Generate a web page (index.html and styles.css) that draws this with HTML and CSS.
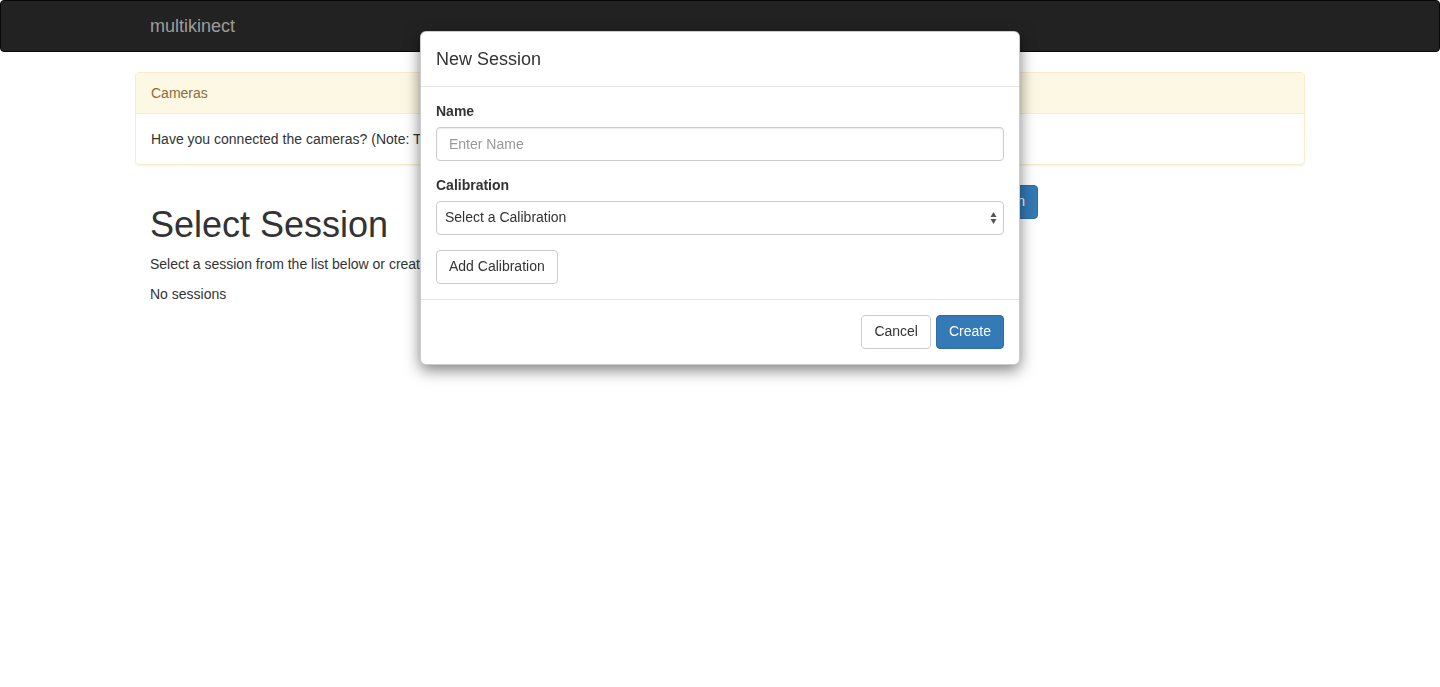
FILE: index.html
```html
<!DOCTYPE html>
<html lang="en">
<head>
<meta charset="utf-8">
<title>multikinect</title>
<link rel="stylesheet" href="styles.css">
</head>
<body>
<nav class="navbar">
  <div class="container">
    <a class="brand" href="#">multikinect</a>
  </div>
</nav>

<main class="container">
  <section class="panel">
    <div class="panel-heading">Cameras</div>
    <div class="panel-body">Have you connected the cameras? (Note: The Kinect cameras must be connected before starting a session.)</div>
  </section>

  <section class="sessions">
    <h1>Select Session</h1>
    <button class="btn btn-primary new-session" type="button">New Session</button>
    <p class="wide">Select a session from the list below or create a new one.</p>
    <p class="wide">No sessions</p>
  </section>
</main>

<div class="modal">
  <div class="modal-dialog">
    <div class="modal-content">
      <div class="modal-header">
        <h4 class="modal-title">New Session</h4>
      </div>
      <div class="modal-body">
        <div class="form-group">
          <label class="label">Name</label>
          <input class="form-control" type="text" placeholder="Enter Name">
        </div>
        <div class="form-group">
          <label class="label">Calibration</label>
          <div class="select-wrap">
            <select class="form-control select">
              <option>Select a Calibration</option>
            </select>
            <svg class="select-arrows" width="7" height="12" viewBox="0 0 7 12" aria-hidden="true">
              <path d="M3.5 0 L6.5 5 L0.5 5 Z" fill="#555"/>
              <path d="M3.5 12 L6.5 7 L0.5 7 Z" fill="#555"/>
            </svg>
          </div>
        </div>
        <button class="btn btn-default" type="button">Add Calibration</button>
      </div>
      <div class="modal-footer">
        <button class="btn btn-default" type="button">Cancel</button>
        <button class="btn btn-primary" type="button">Create</button>
      </div>
    </div>
  </div>
</div>
</body>
</html>
```

FILE: styles.css
```css
* {
  box-sizing: border-box;
}

html, body {
  margin: 0;
  padding: 0;
}

body {
  font-family: "Liberation Sans", Arial, Helvetica, sans-serif;
  font-size: 14px;
  line-height: 1.42857;
  color: #333;
  background: #fff;
}

.container {
  width: 1170px;
  margin: 0 auto;
  padding: 0 15px;
}

/* Navbar */
.navbar {
  min-height: 50px;
  margin-bottom: 20px;
  background: #222;
  border: 1px solid #080808;
  border-radius: 4px;
}

.brand {
  display: block;
  height: 50px;
  padding: 15px 0;
  font-size: 18px;
  line-height: 20px;
  color: #9d9d9d;
  text-decoration: none;
}

/* Panel */
.panel {
  margin: 0 -15px 20px;
  background: #fff;
  border: 1px solid #faebcc;
  border-radius: 4px;
  box-shadow: 0 1px 1px rgba(0, 0, 0, .05);
}

.panel-heading {
  padding: 11px 15px 9px;
  color: #8a6d3b;
  background: #fcf8e3;
  border-bottom: 1px solid #faebcc;
  border-radius: 3px 3px 0 0;
}

.panel-body {
  padding: 16px 15px 14px;
}

/* Sessions */
.sessions {
  display: grid;
  grid-template-columns: 1fr auto;
  width: 888px;
}

.sessions h1 {
  margin: 20px 0 10px;
  font-size: 36px;
  font-weight: 500;
  line-height: 1.1;
  color: #333;
}

.new-session {
  align-self: start;
}

.sessions .wide {
  grid-column: 1 / -1;
  margin: 0 0 10px;
}

/* Buttons */
.btn {
  display: inline-block;
  padding: 6px 12px;
  font-family: inherit;
  font-size: 14px;
  line-height: 1.42857;
  border: 1px solid transparent;
  border-radius: 4px;
  cursor: pointer;
  white-space: nowrap;
}

.btn-default {
  color: #333;
  background: #fff;
  border-color: #ccc;
}

.btn-primary {
  color: #fff;
  background: #337ab7;
  border-color: #2e6da4;
}

/* Modal */
.modal {
  position: fixed;
  top: 0;
  right: 0;
  bottom: 0;
  left: 0;
  z-index: 1050;
}

.modal-dialog {
  width: 600px;
  margin: 31px auto 30px;
}

.modal-content {
  background: #fff;
  border: 1px solid rgba(0, 0, 0, .2);
  border-radius: 6px;
  box-shadow: 0 5px 15px rgba(0, 0, 0, .5);
}

.modal-header {
  padding: 15px;
  border-bottom: 1px solid #e5e5e5;
}

.modal-title {
  margin: 0;
  font-size: 18px;
  font-weight: 500;
  line-height: 24px;
}

.modal-body {
  padding: 15px;
}

.form-group {
  margin-bottom: 15px;
}

.label {
  display: block;
  margin-bottom: 5px;
  font-weight: 700;
}

.form-control {
  display: block;
  width: 100%;
  height: 34px;
  padding: 6px 12px;
  font-family: inherit;
  font-size: 14px;
  line-height: 1.42857;
  color: #555;
  background: #fff;
  border: 1px solid #ccc;
  border-radius: 4px;
  box-shadow: inset 0 1px 1px rgba(0, 0, 0, .075);
}

.form-control::placeholder {
  color: #999;
}

.select-wrap {
  position: relative;
}

.select {
  -webkit-appearance: none;
  appearance: none;
  padding-left: 8px;
  color: #333;
  box-shadow: none;
}

.select-arrows {
  position: absolute;
  right: 7px;
  top: 11px;
  pointer-events: none;
}

.modal-footer {
  display: flex;
  justify-content: flex-end;
  gap: 5px;
  padding: 15px;
  border-top: 1px solid #e5e5e5;
}
```
